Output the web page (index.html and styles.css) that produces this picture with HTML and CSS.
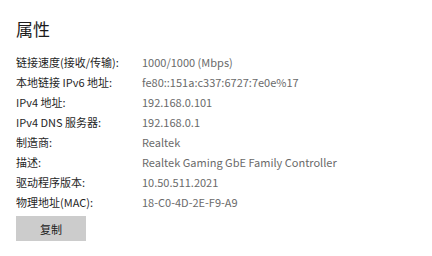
FILE: index.html
```html
<!DOCTYPE html>
<html lang="zh-CN">
<head>
<meta charset="utf-8">
<link rel="stylesheet" href="styles.css">
</head>
<body>
<div class="page">
  <h1 class="title">属性</h1>
  <div class="props">
    <div class="label">链接速度(接收/传输):</div><div class="value">1000/1000 (Mbps)</div>
    <div class="label">本地链接 IPv6 地址:</div><div class="value">fe80::151a:c337:6727:7e0e%17</div>
    <div class="label">IPv4 地址:</div><div class="value">192.168.0.101</div>
    <div class="label">IPv4 DNS 服务器:</div><div class="value">192.168.0.1</div>
    <div class="label">制造商:</div><div class="value">Realtek</div>
    <div class="label">描述:</div><div class="value">Realtek Gaming GbE Family Controller</div>
    <div class="label">驱动程序版本:</div><div class="value">10.50.511.2021</div>
    <div class="label">物理地址(MAC):</div><div class="value">18-C0-4D-2E-F9-A9</div>
  </div>
  <button class="copy">复制</button>
</div>
</body>
</html>
```
FILE: styles.css
```css
html, body {
  margin: 0;
  padding: 0;
  background: #ffffff;
}
.page {
  padding: 18px 16px 0 16px;
  font-family: "Noto Sans CJK SC", "Noto Sans", sans-serif;
  color: #1b1b1b;
}
.title {
  margin: 0;
  font-size: 17px;
  font-weight: 400;
  line-height: 22px;
  height: 24px;
}
.props {
  margin-top: 10px;
  display: grid;
  grid-template-columns: 126px auto;
  grid-auto-rows: 20px;
  font-size: 11px;
  line-height: 20px;
}
.label {
  color: #1f1f1f;
  white-space: nowrap;
}
.value {
  color: #6a6a6a;
  white-space: nowrap;
}
.copy {
  margin-top: 4px;
  width: 70px;
  height: 25px;
  border: none;
  background: #cccccc;
  color: #1b1b1b;
  font-family: "Noto Sans CJK SC", sans-serif;
  font-size: 11px;
  padding: 0;
}
```
